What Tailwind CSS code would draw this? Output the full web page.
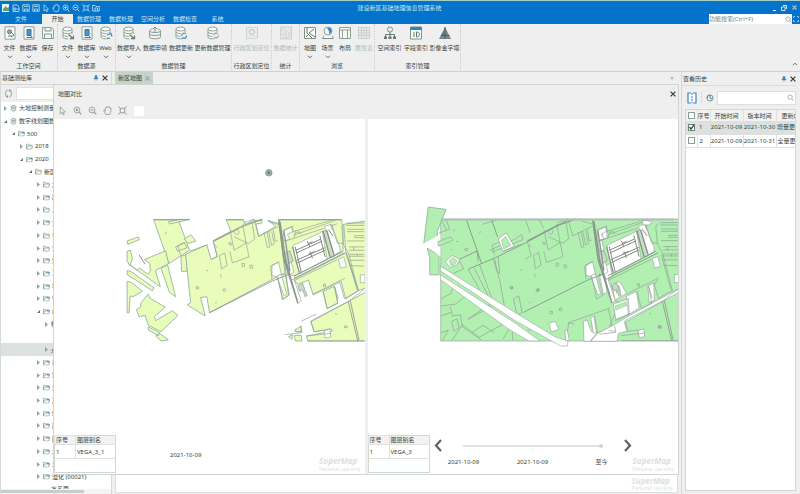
<!DOCTYPE html>
<html lang="zh-CN">
<head>
<meta charset="utf-8">
<title>建设新区基础地理信息管理系统</title>
<script src="https://cdn.jsdelivr.net/npm/@tailwindcss/browser@4"></script>
</head>
<body class="h-screen flex flex-col overflow-hidden bg-[#efefef] text-[#36443b] text-[6px] leading-[8px] font-['Noto_Sans','Noto_Sans_CJK_SC',sans-serif] whitespace-nowrap">

<svg class="hidden" aria-hidden="true">
  <symbol id="doc" viewBox="0 0 14 14"><path d="M2 .8h10v12.4H2z" fill="#f8faf9" stroke="#8ba294"/><circle cx="6.500" cy="5.800" r="2" fill="#9aaaa0" stroke="#667a6e"/><path d="M8 6l3 3-3 2M5 10h4" fill="none" stroke="#667a6e"/></symbol>
  <symbol id="docdb" viewBox="0 0 14 14"><path d="M2 .8h10v12.400H2z" fill="#f8faf9" stroke="#8ba294"/><path d="M5 3.500h4v6H5z" fill="#4b93cf" stroke="#33729f"/><path d="M4.500 11.500h6l-2-2" fill="none" stroke="#667a6e"/></symbol>
  <symbol id="save" viewBox="0 0 14 14"><path d="M1.500 1.500h9l2 2v9h-11z" fill="#f6f8f7" stroke="#8ba294"/><path d="M4 1.500v3.500h6V2M3.500 12.500V8h7v4.500" fill="none" stroke="#7d9486"/></symbol>
  <symbol id="db" viewBox="0 0 14 14"><path d="M2 3v8c0 2.400 9 2.400 9 0V3" fill="#f8faf9" stroke="#8ba294"/><ellipse cx="6.500" cy="3" rx="4.500" ry="2" fill="#fff" stroke="#8ba294"/><path d="M2 6c0 2 9 2 9 0M2 8.800c0 2 9 2 9 0" fill="none" stroke="#8ba294"/></symbol>
  <symbol id="dbarrow" viewBox="0 0 14 14"><use href="#db"/><path d="M7 8h6v5H7z" fill="#efefef"/><path d="M7.500 8.500l4.500 4M12.500 9.500v3.200H9" fill="none" stroke="#667a6e" stroke-width="1.200"/></symbol>
  <symbol id="dbweb" viewBox="0 0 14 14"><use href="#db"/><circle cx="10" cy="10" r="3" fill="#efefef"/><path d="M8 9l4-1.500 1 3" fill="none" stroke="#3d8ed0" stroke-width="1.300"/><path d="M8 12l3 .5" stroke="#667a6e"/></symbol>
  <symbol id="dbup" viewBox="0 0 14 14"><path d="M1.500 5v6c0 2.400 11 2.400 11 0V5M1.500 8c0 2 11 2 11 0M1.500 5c0-1.500 2-2 3-2M12.500 5c0-1.500-2-2-3-2M1.500 5c0 2 11 2 11 0" fill="none" stroke="#8ba294"/><path d="M7 6V1M5 3l2-2 2 2" fill="none" stroke="#7d9486"/></symbol>
  <symbol id="dbsync" viewBox="0 0 14 14"><use href="#db"/><circle cx="10" cy="9.500" r="3.600" fill="#efefef"/><path d="M7.500 10a2.600 2.600 0 0 1 4.500-2" fill="none" stroke="#7d9486" stroke-width="1.100"/><path d="M12.500 9.500a2.600 2.600 0 0 1-4.500 2" fill="none" stroke="#3d8ed0" stroke-width="1.300"/></symbol>
  <symbol id="dbsync2" viewBox="0 0 14 14"><use href="#db"/><circle cx="10" cy="9.500" r="3.600" fill="#efefef"/><circle cx="10" cy="9.500" r="2.500" fill="none" stroke="#7d9486" stroke-dasharray="6 2"/></symbol>
  <symbol id="locate" viewBox="0 0 14 14"><path d="M1.500 2l4-1 3 1 4-1v11l-4 1-3-1-4 1zM3 4l7 7M8 3L5 10" fill="#ececec" stroke="#cdd4d0"/><circle cx="7" cy="6" r="2.500" fill="#e8ebe9" stroke="#bcc5c0"/></symbol>
  <symbol id="stat" viewBox="0 0 14 14"><path d="M1.500 1h11v12h-11zM4 10V7M7 10V4M10 10V6M3 3h3M4 11.500h6" fill="#e6e9e7" stroke="#cdd4d0" stroke-width="1.200"/></symbol>
  <symbol id="map" viewBox="0 0 14 14"><path d="M1.500 1.500h11v11h-11z" fill="#f8faf9" stroke="#7d9486"/><path d="M4 2v5l5 5M11 3L6 7l6 4M3 11l3-3" fill="none" stroke="#667a6e"/></symbol>
  <symbol id="scene" viewBox="0 0 14 14"><path d="M3 10l-1.500 2.500h11L11 10" fill="#f8faf9" stroke="#7d9486"/><circle cx="7" cy="5" r="4" fill="#f8faf9" stroke="#8ba294"/><path d="M6 2c3-1 5 1 4.500 4L8 8V5z" fill="#2b83c9"/></symbol>
  <symbol id="layout" viewBox="0 0 14 14"><path d="M1.500 1.500h11v11h-11zM1.500 4h11M4.500 4v8.500M9.500 4v8.500" fill="#f8faf9" stroke="#8ba294"/></symbol>
  <symbol id="grid" viewBox="0 0 14 14"><path d="M1.500 1.500h11v11h-11zM1.500 4.500h11M1.500 7h11M1.500 9.500h11M4.500 1.500v11M7 1.500v11M9.500 1.500v11" fill="#eceeed" stroke="#c9d0cc"/></symbol>
  <symbol id="spatial" viewBox="0 0 14 14"><circle cx="7" cy="3.500" r="2.600" fill="#e3eee9" stroke="#7d9486"/><path d="M7 6v5M2.500 11V8.500h9V11" fill="none" stroke="#667a6e"/><path d="M1 10.500h3v2.500H1zM5.500 10.500h3V13h-3zM10 10.500h3V13h-3z" fill="#66796e"/></symbol>
  <symbol id="field" viewBox="0 0 14 14"><path d="M1.500 1h11v12h-11z" fill="#f8faf9" stroke="#7d9486"/><path d="M1.500 1h11v3h-11z" fill="#2b83c9"/><path d="M5 6v5M7.500 6v5c4 0 4-5 0-5z" fill="none" stroke="#667a6e"/></symbol>
  <symbol id="pyramid" viewBox="0 0 14 14"><path d="M7 1l6 12H1z" fill="#7d8a83"/><path d="M4.500 6.500l2 1v2l-3-1z" fill="#2b83c9"/><path d="M7 1v12M3 9.500h8.500" stroke="#4e5a54" fill="none"/></symbol>
  <symbol id="chev" viewBox="0 0 6 4"><path d="M1 .8l2 2 2-2" fill="none" stroke="#5d6b64" stroke-width="1"/></symbol>
  <symbol id="x" viewBox="0 0 6 6"><path d="M.6.6l4.800 4.800M5.400.6L.6 5.400" stroke="currentColor" stroke-width="1.300"/></symbol>
  <symbol id="pin" viewBox="0 0 6 6"><path d="M2 .5h2V3h1v1H1V3h1zM3 4v2" fill="#2b83c9" stroke="#4f8fbf" stroke-width=".5"/></symbol>
  <symbol id="lens" viewBox="0 0 8 8"><circle cx="3.500" cy="3.500" r="2.500" fill="none" stroke="currentColor" stroke-width=".8"/><path d="M5.300 5.300L7.500 7.500" stroke="currentColor"/></symbol>
  <symbol id="cursor" viewBox="0 0 8 8"><path d="M2 .7l4.500 4.500-2 .2 1 2-1 .4-.9-2L2 7z" fill="none" stroke="currentColor" stroke-width=".7"/></symbol>
  <symbol id="zin" viewBox="0 0 8 8"><circle cx="3.500" cy="3.500" r="2.600" fill="none" stroke="currentColor" stroke-width=".7"/><path d="M5.400 5.400l2 2M2.300 3.500h2.400M3.500 2.300v2.400" stroke="currentColor"/></symbol>
  <symbol id="zout" viewBox="0 0 8 8"><circle cx="3.500" cy="3.500" r="2.600" fill="none" stroke="currentColor" stroke-width=".7"/><path d="M5.400 5.400l2 2M2.300 3.500h2.400" stroke="currentColor"/></symbol>
  <symbol id="hand" viewBox="0 0 8 8"><path d="M2.600 7.500C1.500 6 .8 4.800.7 3.800l1.300.6V1.700h1V1h1v-.3h1V1h1v.8h1V5L6 7.500z" fill="none" stroke="currentColor" stroke-width=".7"/></symbol>
  <symbol id="extent" viewBox="0 0 8 8"><path d="M2 2h4v4H2zM.3.3L2 2M7.700.3L6 2M.3 7.700L2 6M7.700 7.700L6 6" fill="none" stroke="currentColor" stroke-width=".8"/></symbol>
  <symbol id="page" viewBox="0 0 8 8"><path d="M1 1h4l2 2v4.500H1zM3 3v4M1 5h6" fill="none" stroke="currentColor" stroke-width=".8"/></symbol>
  <symbol id="open" viewBox="0 0 8 8"><path d="M.7 7V1.500h2.500l.8 1h3.300V7zM3 7V4h2.500v3" fill="none" stroke="currentColor" stroke-width=".8"/></symbol>
  <symbol id="disk" viewBox="0 0 8 8"><path d="M.8.8h6.400v6.400H.8zM2.500 7V5h3v2M2 2.500h4" fill="none" stroke="currentColor" stroke-width=".8"/></symbol>
  <symbol id="folder" viewBox="0 0 7 6"><path d="M.5 5.500V.7h2l.7 1h2.600v1M.5 5.500l.9-3h5.100l-.7 3z" fill="#fff" stroke="#7f9d8c" stroke-width=".7"/></symbol>
  <symbol id="folderb" viewBox="0 0 7 6"><use href="#folder"/><path d="M3.500 1.700h2.600v1.300" fill="none" stroke="#3d8ed0" stroke-width=".9"/></symbol>
  <symbol id="src" viewBox="0 0 7 8"><path d="M1 1.800v4c0 1.600 5 1.600 5 0v-4" fill="#fff" stroke="#7d9486" stroke-width=".8"/><ellipse cx="3.500" cy="1.800" rx="2.500" ry="1.200" fill="#dfe8e3" stroke="#7d9486" stroke-width=".8"/><path d="M2 4.500h3" stroke="#3d8ed0"/></symbol>

  <!-- Buildings, tracks and plot boundaries that both epochs have in common -->
  <symbol id="common" viewBox="0 0 760 560" overflow="visible">
    <g fill="#fff" stroke="#93a89c" stroke-width="2">
      <path d="M521 258L602 220 610 214 624 300 542 342 528 300z"/>
      <path d="M616 200L638 194 648 226 662 262 664 276 642 290 628 240z"/>
      <path d="M458 318l20-10 8 36-14 8-14-4zM512 238l-18 6-2-30 25-12 3 14-16 8zM658 298l16-6 8 30-18 4zM724 346h14v24h-14z"/>
      <path d="M500 290l10-6 14 54-12 8zM472 350l14-6 16 60-8 4z"/>
      <path d="M615 515l17-6 3 24-17 3z"/>
      <path d="M516 362l8-4 22 66-10 8z"/>
    </g>
    <path d="M494 280l18-6 10 30-18 12zM610 216l14-4 22 76-12 6zM536 380l14-8 14 36-6 4-8-22-8 6z" fill="#c9dcc4" stroke="#8a988f" stroke-width="2"/>
    <g fill="none" stroke="#8fa095" stroke-width="2">
      <path d="M332 212L344 272 380 250 370 195M344 232l44 20 18-14-8-50M380 250l9 42-50 18-8-34M372 190l32-12 14 52 60-30M300 288l16-8 7 38-17 10zM275 300l18-10-12-46 92-48 55-18M344 215c6-8 16-6 14 4s-12 6-14-4"/>
      <path d="M434 218l10 46 8-2-9-46M448 215l9 42 8-4-8-38M462 210l6 35 7-3M445 185l35 10"/>
      <path d="M210 275l55-20M183 288l-8-30 22-10M458 360l-4-40 26-14M475 350l15 70 20-14-12-64"/>
      <path d="M270 460l190-96 50-20M283 245l90-46 56-20" stroke="#858f88" stroke-width="2.500"/>
      <path d="M478 180l16 120 42 132M482 186l18 120 34 118M494 214l18 120" stroke="#8c968f" stroke-width="4"/>
      <path d="M490 212l30-12 2 20M522 216l120-36M525 226l130-46M530 212l-6 24 90-30M640 210l-6-16M655 192l-18 6 18 52 18 2M676 192l-8 8 5 55 16 28 29 112M684 285l30 106M500 244l24-8M530 220l10-4 4 8"/>
      <path d="M528 273l76-34M532 302l86-38M530 281l78-36M534 310l84-38" stroke="#858782" stroke-width="3"/>
      <path d="M564 244l8 18M572 276l8 20M602 228l16 64M568 252l12-6M568 284l18-8M612 214l20 78M622 212l22 72M628 210l14 20M520 262l20 78M528 262l18 76" stroke="#858782" stroke-width="3"/>
      <path d="M524 357L676 280M524 350L668 276" stroke="#838d86" stroke-width="2.500"/>
      <path d="M524 364L655 300M580 405l98-49M612 396l12 52 32-16-10-52M646 380l12 38M662 370l14 48 44-26"/>
      <path d="M682 190h54M682 197h54M684 209h52M684 216h52M705 228h31M705 234h31M684 244h52M690 262h46M690 272h46M690 284h46M690 290h46M690 302h46M690 318l46 2M704 262v12M715 284v8" stroke="#8c9c92"/>
      <path d="M575 485l115-60 46-36M575 485l10 32 30-4M562 530l74-8M565 545h170M545 486l46-22M498 526l50-6-4-20M526 516l20 0"/>
      <path d="M688 428l22 92 6 25M694 425l26 118" stroke="#8b938e" stroke-width="2.500"/>
      <path d="M135 224l8-8M286 256l8 8M302 344l4 10M286 432l6-4M230 382h7v6h-7zM310 390l6-3 3 6-6 3zM260 334l6-2M328 250l6-2 2 8-6 0zM368 312h7v9h-7zM391 318l7-2 2 10-8 0zM613 374h6v7h-6zM648 462l6 4M676 500h8v5h-8z"/>
    </g>
  </symbol>
</svg>

<header class="bg-[#0473cb] text-[#c9e9ef] border-t border-[#a5cfc8] shrink-0">
  <div class="h-[13px] grid grid-cols-[1fr_auto_1fr] items-center pl-[2px] pr-[3px]">
    <div class="flex gap-[2px] items-center">
      <svg class="size-[8px]"><rect x="0" y="0" width="7" height="8" fill="#e9f2ef"/><path d="M1 5l3-3 1 2 2-1v4H1z" fill="#5f9a7d"/></svg>
      <button aria-label="新建"><svg class="size-[8px] block"><use href="#page"/></svg></button>
      <button aria-label="保存"><svg class="size-[8px] block"><use href="#disk"/></svg></button>
      <button aria-label="另存"><svg class="size-[8px] block"><use href="#disk"/></svg></button>
      <button aria-label="选择"><svg class="size-[8px] block"><use href="#cursor"/></svg></button>
      <button aria-label="漫游"><svg class="size-[8px] block"><use href="#hand"/></svg></button>
      <button aria-label="放大"><svg class="size-[8px] block"><use href="#zin"/></svg></button>
      <button aria-label="缩小"><svg class="size-[8px] block"><use href="#zout"/></svg></button>
      <button aria-label="全幅"><svg class="size-[8px] block"><use href="#extent"/></svg></button>
      <button aria-label="打开"><svg class="size-[8px] block"><use href="#open"/></svg></button>
    </div>
    <h1>建设新区基础地理信息管理系统</h1>
    <div class="flex justify-end items-center gap-[5px]">
      <button aria-label="最小化" class="w-[3px] h-[6px] border-b border-white"></button>
      <button aria-label="还原"><svg class="size-[6px] block"><path d="M2 .5h3.500V4M.5 2h3.500v3.500H.5z" fill="none" stroke="#d5e8f5"/></svg></button>
      <button aria-label="关闭" class="text-[#c9b9a5]"><svg class="size-[5px] block"><use href="#x"/></svg></button>
    </div>
  </div>
  <div class="h-[10px] flex items-stretch">
    <nav class="flex items-stretch text-center">
      <button class="w-[42px]">文件</button>
      <button class="w-[31px] bg-[#efefef] text-[#36443b]">开始</button>
      <button class="w-[32px]">数据管理</button>
      <button class="w-[32px]">数据处理</button>
      <button class="w-[32px]">空间分析</button>
      <button class="w-[32px]">数据检查</button>
      <button class="w-[33px]">系统</button>
    </nav>
    <label class="ml-auto w-[83px] flex items-center bg-white text-[#84988c]">
      <input aria-label="功能搜索" placeholder="功能搜索(Ctrl+F)" class="w-full min-w-0 h-[10px] outline-none placeholder:text-[#74887c]">
      <svg class="size-[7px] shrink-0"><use href="#lens"/></svg>
    </label>
    <button aria-label="全屏" class="w-[8px] flex items-center justify-center"><svg class="size-[6px]"><path d="M.5 2V.5H2M4 .5h1.500V2M5.500 4v1.500H4M2 5.500H.5V4" fill="none" stroke="#8cc6ec"/></svg></button>
  </div>
</header>

<section class="h-[48px] shrink-0 flex border-b border-[#cbd3ce] pb-[1px]">
  <div class="flex flex-col border-r border-dotted border-[#c6cfca]">
    <div class="flex flex-1 pt-[2px]">
      <button class="w-[19px] flex flex-col items-center"><svg class="size-[14px] mb-[4px]"><use href="#doc"/></svg>文件<svg class="w-[6px] h-[4px] mt-[3px]"><use href="#chev"/></svg></button>
      <button class="w-[19px] flex flex-col items-center"><svg class="size-[14px] mb-[4px]"><use href="#docdb"/></svg>数据库<svg class="w-[6px] h-[4px] mt-[3px]"><use href="#chev"/></svg></button>
      <button class="w-[19px] flex flex-col items-center"><svg class="size-[14px] mb-[4px]"><use href="#save"/></svg>保存</button>
    </div>
    <div class="text-center">工作空间</div>
  </div>
  <div class="flex flex-col border-r border-dotted border-[#c6cfca]">
    <div class="flex flex-1 pt-[2px]">
      <button class="w-[19px] flex flex-col items-center"><svg class="size-[14px] mb-[4px]"><use href="#dbarrow"/></svg>文件<svg class="w-[6px] h-[4px] mt-[3px]"><use href="#chev"/></svg></button>
      <button class="w-[19px] flex flex-col items-center"><svg class="size-[14px] mb-[4px]"><use href="#docdb"/></svg>数据库<svg class="w-[6px] h-[4px] mt-[3px]"><use href="#chev"/></svg></button>
      <button class="w-[19px] flex flex-col items-center"><svg class="size-[14px] mb-[4px]"><use href="#dbweb"/></svg>Web<svg class="w-[6px] h-[4px] mt-[3px]"><use href="#chev"/></svg></button>
    </div>
    <div class="text-center">数据源</div>
  </div>
  <div class="flex flex-col border-r border-dotted border-[#c6cfca]">
    <div class="flex flex-1 pt-[2px]">
      <button class="w-[26px] flex flex-col items-center"><svg class="size-[14px] mb-[4px]"><use href="#dbarrow"/></svg>数据导入<svg class="w-[6px] h-[4px] mt-[3px]"><use href="#chev"/></svg></button>
      <button class="w-[26px] flex flex-col items-center"><svg class="size-[14px] mb-[4px]"><use href="#dbup"/></svg>数据申领</button>
      <button class="w-[26px] flex flex-col items-center"><svg class="size-[14px] mb-[4px]"><use href="#dbsync"/></svg>数据更新</button>
      <button class="w-[37px] flex flex-col items-center"><svg class="size-[14px] mb-[4px]"><use href="#dbsync2"/></svg>更新数据管理</button>
    </div>
    <div class="text-center">数据管理</div>
  </div>
  <div class="flex flex-col border-r border-dotted border-[#c6cfca]">
    <div class="flex flex-1 pt-[2px]">
      <button disabled class="w-[39px] flex flex-col items-center text-[#aebbb3]"><svg class="size-[14px] mb-[4px]"><use href="#locate"/></svg>行政区划定位</button>
    </div>
    <div class="text-center">行政区划定位</div>
  </div>
  <div class="flex flex-col border-r border-dotted border-[#c6cfca]">
    <div class="flex flex-1 pt-[2px]">
      <button disabled class="w-[27px] flex flex-col items-center text-[#aebbb3]"><svg class="size-[14px] mb-[4px]"><use href="#stat"/></svg>数据统计</button>
    </div>
    <div class="text-center">统计</div>
  </div>
  <div class="flex flex-col border-r border-dotted border-[#c6cfca]">
    <div class="flex flex-1 pt-[2px] pl-[1px]">
      <button class="w-[18px] flex flex-col items-center"><svg class="size-[14px] mb-[4px]"><use href="#map"/></svg>地图<svg class="w-[6px] h-[4px] mt-[3px]"><use href="#chev"/></svg></button>
      <button class="w-[17px] flex flex-col items-center"><svg class="size-[14px] mb-[4px]"><use href="#scene"/></svg>场景<svg class="w-[6px] h-[4px] mt-[3px]"><use href="#chev"/></svg></button>
      <button class="w-[18px] flex flex-col items-center"><svg class="size-[14px] mb-[4px]"><use href="#layout"/></svg>布局</button>
      <button disabled class="w-[20px] flex flex-col items-center text-[#aebbb3]"><svg class="size-[14px] mb-[4px]"><use href="#grid"/></svg>属性表</button>
    </div>
    <div class="text-center">浏览</div>
  </div>
  <div class="flex flex-col border-r border-dotted border-[#c6cfca]">
    <div class="flex flex-1 pt-[2px] pl-[1px]">
      <button class="w-[27px] flex flex-col items-center"><svg class="size-[14px] mb-[4px]"><use href="#spatial"/></svg>空间索引</button>
      <button class="w-[26px] flex flex-col items-center"><svg class="size-[14px] mb-[4px]"><use href="#field"/></svg>字段索引</button>
      <button class="w-[31px] flex flex-col items-center"><svg class="size-[14px] mb-[4px]"><use href="#pyramid"/></svg>影像金字塔</button>
    </div>
    <div class="text-center">索引管理</div>
  </div>
  <button aria-label="收起功能区" class="ml-auto self-end mr-[2px] mb-[4px]"><svg class="w-[6px] h-[4px] block rotate-180"><use href="#chev"/></svg></button>
</section>

<main class="relative flex-1 min-h-0 grid grid-cols-[112px_1fr_119px] gap-x-[3px]">
  <aside class="relative flex flex-col min-h-0 border-x border-[#d4dad7]">
    <div class="h-[13px] shrink-0 flex items-center pl-[1px] pr-[3px] border-b border-[#d4dad7]">
      <h2>基础测绘库</h2>
      <button aria-label="固定" class="ml-auto mr-[3px]"><svg class="size-[6px] block"><use href="#pin"/></svg></button>
      <button aria-label="关闭面板"><svg class="size-[6px] block"><use href="#x"/></svg></button>
    </div>
    <div class="h-[17px] shrink-0 flex items-center pl-[3px] gap-[3px]">
      <button aria-label="刷新"><svg viewBox="0 0 10 10" class="size-[9px] block" fill="none" stroke="#7d9486"><path d="M4 1C1 2 1 8 4 9M2 8l2 1V7"/><path d="M6 9c3-1 3-7 0-8M8 2L6 1v2"/></svg></button>
      <input aria-label="筛选" class="flex-1 min-w-0 h-[13px] bg-white border border-[#dfe4e1]">
    </div>
    <ul id="tree" class="flex-1 min-h-0 flex flex-col bg-white overflow-hidden -mb-[2px]"></ul>
    <div class="absolute inset-x-0 bottom-0 h-[5px] bg-[#f2f4f3] pt-[1px]"><div class="w-3/4 h-[3px] bg-[#c3cfc8]"></div></div>
  </aside>

  <section class="flex flex-col min-h-0">
    <div class="h-[13px] shrink-0 flex border-b border-[#c6d3cb]">
      <button class="bg-[#c6d3cb] pl-[3px] pr-[3px] flex items-center gap-[3px]">新区地图<svg class="size-[5px] text-[#9aaca1]"><use href="#x"/></svg></button>
      <button aria-label="窗口列表" class="ml-auto mr-[4px]"><svg class="w-[4px] h-[3px]" viewBox="0 0 6 4"><path d="M0 0h6L3 4z" fill="#a5b2aa"/></svg></button>
    </div>
    <div class="flex-1 bg-white border border-[#d9dfdc] mb-[1px] flex items-end justify-end">
      <div class="pr-[4px] text-[#dcdfdd] text-[5px] leading-[7px]"><div class="text-[8px] leading-[9px] italic font-bold">SuperMap</div>Personal use only</div>
    </div>
  </section>

  <aside class="flex flex-col min-h-0 min-w-0 border-l border-[#d4dad7] pr-[4px]">
    <div class="h-[13px] shrink-0 flex items-center pl-[1px]">
      <h2>查看历史</h2>
      <button aria-label="固定" class="ml-auto mr-[3px]"><svg class="size-[6px] block"><use href="#pin"/></svg></button>
      <button aria-label="关闭面板"><svg class="size-[6px] block"><use href="#x"/></svg></button>
    </div>
    <div class="h-[24px] shrink-0 flex items-center border-t border-[#d9dfdc] pl-[5px]">
      <button aria-label="对比"><svg class="w-[10px] h-[12px] block" viewBox="0 0 10 12"><path d="M4 1H1v10h3M6 1h3v10H6" fill="#fff" stroke="#3487c4" stroke-width="1.200"/><path d="M5 1v10" stroke="#58a" stroke-dasharray="2 1"/></svg></button>
      <span class="h-[11px] border-l border-dotted border-[#c6cfca] mx-[4px]"></span>
      <button aria-label="时间"><svg class="size-[8px] block" viewBox="0 0 8 8"><circle cx="4" cy="4" r="3" fill="none" stroke="#7d9486"/><path d="M1 4a3 3 0 0 1 3-3M4 2v2l2 1" fill="none" stroke="#3487c4"/></svg></button>
      <label class="ml-[3px] flex-1 min-w-0 flex items-center bg-white border border-[#d9dfdc] text-[#8a9b91]"><input aria-label="搜索历史" class="w-full min-w-0 h-[12px] outline-none"><svg class="size-[7px] mr-[1px] shrink-0"><use href="#lens"/></svg></label>
    </div>
    <div class="flex-1 ml-[3px] mb-[3px] bg-white border border-[#cfd8d3] overflow-hidden">
      <table class="w-[128px] table-fixed border-collapse text-center">
        <colgroup><col class="w-[11px]"><col class="w-[13px]"><col class="w-[33px]"><col class="w-[33px]"><col class="w-[38px]"></colgroup>
        <thead><tr class="h-[11px] bg-[#f1f2f1]">
          <th class="p-0 border-r border-[#dde2df]"><input type="checkbox" aria-label="全选" class="appearance-none size-[7px] border border-[#8aa093] bg-white block mx-auto"></th>
          <th class="p-0 font-normal border-r border-[#dde2df]">序号</th><th class="p-0 font-normal border-r border-[#dde2df]">开始时间</th><th class="p-0 font-normal border-r border-[#dde2df]">版本时间</th><th class="p-0 pl-[5px] font-normal text-left">更新内容</th></tr></thead>
        <tbody>
          <tr class="h-[13px] bg-[#dce1df] border-b border-[#dde2df]"><td class="p-0"><label class="grid place-items-center"><input type="checkbox" checked aria-label="选择 1" class="col-start-1 row-start-1 appearance-none size-[7px] border border-[#6f8478] bg-white"><svg class="col-start-1 row-start-1 size-[7px] pointer-events-none" viewBox="0 0 7 7"><path d="M1.500 3l1.600 2.200L5.800 1" fill="none" stroke="#36443b" stroke-width="1.300"/></svg></label></td><td class="p-0 pl-[2px] text-left">1</td><td class="p-0">2021-10-09</td><td class="p-0">2021-10-30</td><td class="p-0 pl-[1px] text-left">增量更新</td></tr>
          <tr class="h-[13px] border-b border-[#dde2df]"><td class="p-0"><input type="checkbox" aria-label="选择 2" class="appearance-none size-[7px] border border-[#8aa093] bg-white block mx-auto"></td><td class="p-0 pl-[2px] text-left border-x border-[#dde2df]">2</td><td class="p-0 border-r border-[#dde2df]">2021-10-09</td><td class="p-0 border-r border-[#dde2df]">2021-10-31</td><td class="p-0 pl-[1px] text-left">全量更新</td></tr>
        </tbody>
      </table>
    </div>
  </aside>

  <!-- Floating comparison window -->
  <div role="dialog" aria-label="地图对比" class="absolute left-[53px] right-[121px] top-[12px] bottom-[19px] flex flex-col bg-[#efefef] border border-[#cdd6d1]">
    <div class="h-[17px] shrink-0 flex items-center pl-[4px] pr-[2px]"><h2>地图对比</h2><button aria-label="关闭" class="ml-auto"><svg class="size-[6px] block"><use href="#x"/></svg></button></div>
    <div class="h-[17px] shrink-0 flex items-center pl-[4px] gap-[6px] text-[#84998c]">
      <button aria-label="选择"><svg class="size-[9px] block"><use href="#cursor"/></svg></button>
      <button aria-label="放大"><svg class="size-[9px] block"><use href="#zin"/></svg></button>
      <button aria-label="缩小"><svg class="size-[9px] block"><use href="#zout"/></svg></button>
      <button aria-label="漫游"><svg class="size-[9px] block"><use href="#hand"/></svg></button>
      <button aria-label="全幅"><svg class="size-[9px] block"><use href="#extent"/></svg></button>
      <span class="ml-[1px] size-[10px] bg-white"></span>
    </div>
    <div class="flex-1 min-h-0 grid grid-cols-2 gap-x-[3px]">
      <section class="bg-white flex flex-col min-w-0 min-h-0">
        <svg viewBox="54 119 310 317" preserveAspectRatio="xMinYMin meet" class="flex-1 min-h-0 w-full">
          <circle cx="269.500" cy="173" r="3.300" fill="#9fb3a8" stroke="#72877b" stroke-width=".6"/><path d="M268 174l1.500-3 1.500 3z" fill="#5d7066"/>
          <g transform="translate(120 160) scale(.33333)">
            <g fill="#e9fcba" stroke="#8fae9e" stroke-width="2.500" stroke-linejoin="round">
              <path d="M102 180H176L210 272 148 312z"/><path d="M147 186L180 179H210L150 193z"/>
              <path d="M194 238L214 226 229 244 206 252zM168 262L194 250 203 264 174 275z"/>
              <path d="M22 244L56 232 59 240 24 254zM22 275L32 272 38 298 30 318 22 305z"/>
              <path d="M30 316L52 332 60 326 84 344 92 334 90 312 74 300 138 274 147 312 107 333 122 382z"/><path d="M58 286L76 314" stroke="#777f7a"/>
              <path d="M22 333L34 336 103 385 98 394 22 345zM22 366L34 368 68 395 42 411 31 410 28 460H22z"/>
              <path d="M124 326L144 316 168 412 150 400z"/>
              <path d="M86 404L90 416 137 443 104 472 108 484 158 454 175 468 124 517 86 498 76 468 58 472 50 450 62 444 64 430z"/>
              <path d="M86 503L120 520 116 529 86 512zM120 522L146 542 124 545 108 530z"/>
              <path d="M184 290L200 286 203 335 186 336z"/>
              <path d="M198 284L262 256 275 300 293 291 281 243 335 215 320 180H372L378 195 400 182H428L428 190 410 193 418 230 470 200 446 182 480 192 497 340 458 360 270 460 262 412 243 414 257 470 203 436 213 430z"/>
              <path d="M478 180H667L672 205 672 276 524 350 500 340z"/>
              <path d="M674 194L740 184V385L718 394 680 276z"/>
              <path d="M474 350L500 343 508 408 490 420z"/>
              <path d="M524 360L680 280 718 394 680 418 666 366 582 406 568 362 535 375z"/>
              <path d="M612 396L646 380 656 430 624 448z"/>
              <path d="M575 487L690 425 740 398V545H565L562 530 640 515 635 508 585 518z"/>
              <path d="M526 512L546 500V518L532 518zM508 532L520 526 518 540zM526 528H546L548 545H528z"/>
            </g>
            <use href="#common" width="760" height="560"/>
            <path d="M478 180H667M102 180H210M320 180H372" stroke="#94a79b" stroke-width="4"/>
          </g>
        </svg>
        <div class="h-[39px] shrink-0 flex">
          <table class="w-[62px] h-[38px] table-fixed border-collapse border border-[#cfd8d3]">
            <colgroup><col class="w-[21px]"><col></colgroup>
            <thead><tr class="bg-[#f1f2f1]"><th class="p-0 pl-[1px] font-normal text-left border border-[#dde2df]">序号</th><th class="p-0 pl-[1px] font-normal text-left">图层别名</th></tr></thead>
            <tbody><tr class="border-y border-[#dde2df]"><td class="p-0 pl-[1px] border-r border-[#dde2df]">1</td><td class="p-0 pl-[1px]">VEGA_3_1</td></tr><tr><td class="p-0" colspan="2">&nbsp;</td></tr></tbody>
          </table>
          <time class="ml-[54px] mt-[16px]">2021-10-09</time>
          <div class="ml-auto self-end pr-[4px] pb-[1px] text-[#dcdfdd] text-[5px] leading-[7px]"><div class="text-[8px] leading-[11px] italic font-bold">SuperMap</div>Personal use only</div>
        </div>
      </section>
      <section class="bg-white flex flex-col min-w-0 min-h-0">
        <svg viewBox="367 119 310 317" preserveAspectRatio="xMinYMin meet" class="flex-1 min-h-0 w-full">
          <g transform="translate(415 200) scale(.33333)">
            <path d="M75 58H800V425H75z" fill="#b2f0b2" stroke="#9db0a3" stroke-width="2.500"/>
            <path d="M37 22L91 29 64 96 66 110 24 130zM34 146L70 166V226H42V174z" fill="#b2f0b2" stroke="#8fae9e" stroke-width="2.500"/>
            <path d="M24 130L74 104V172L60 160z" fill="#fff"/>
            <path d="M66 126L106 112 112 122 68 140z" fill="#b2f0b2" stroke="#96a29a" stroke-width="2"/>
            <g fill="none" stroke="#96a29a" stroke-width="2.200">
              <path d="M330 60L344 100M372 60L384 86M78 60L92 92M92 60L100 86M70 100L104 88M106 150h4M122 126h6M112 92h6M148 146h7v7h-7zM200 74L252 58M222 152L300 118 318 104 322 120 228 158"/>
              <path d="M152 60L198 192M198 192L240 174 320 135 378 104 455 62M198 192L160 208M184 154L126 182M184 154L188 185M228 60L246 112" stroke="#858f88" stroke-width="2.500"/>
              <path d="M158 210L192 270M176 206L218 290M192 196L230 300M232 176L246 220 254 250 266 318M248 172L252 222M160 208L158 214M130 182L144 208 112 222M294 298L310 290 320 340 304 346zM238 180L244 214 252 222"/>
              <path d="M76 298L106 282 110 268M76 320L120 314 156 284M104 322L110 350 134 346 140 382 200 424M76 350L108 338M108 366L124 358 130 386 114 396zM156 360L206 326M156 360L226 322 218 314M76 400L98 392 80 424M140 376L108 424M168 400L202 378 236 400M190 414L260 376M262 420L280 390 330 398 362 384 370 400M290 396L292 424M140 376L190 414"/>
              <path d="M456 400L460 370 478 374M460 370L584 326M538 350L546 400 580 390 600 340M512 360L524 400M580 330L600 424M590 300L640 320 600 360M700 280L728 240"/>
              <path d="M404 336h7v7h-7zM432 326h7v7h-7zM730 380h7v7h-7zM286 262h6v6h-6zM362 270h7v6h-7z"/>
            </g>
            <path d="M74 200L316 350 418 412 458 425 456 440 436 440 300 365 74 214z" fill="#fff" stroke="#9db0a3" stroke-width="2"/>
            <path d="M74 226L300 372 374 425 340 425 280 390 74 240z" fill="#fff" stroke="#9db0a3" stroke-width="2"/>
            <g fill="#fff" stroke="#96a29a" stroke-width="2">
              <path d="M88 186L110 168 132 180 124 196 104 204zM248 118L272 100 296 140 262 156z"/>
              <path d="M400 372L420 366 430 390 408 398zM448 394L456 392 462 424H452zM504 366L516 362 528 396 546 400 524 426H506z"/>
              <path d="M526 354L536 350 544 400 534 402z"/>
              <path d="M550 230L566 224 576 278 562 286zM560 96L574 94 576 116 562 118zM560 204L584 192 592 232 572 240zM548 126L560 122 566 152 554 156z"/>
              <path d="M588 254L614 246 634 282 600 302zM594 314L640 298 642 344 602 360zM634 290L664 276 672 326 640 346zM698 258L716 252 718 302 702 310z"/>
              <path d="M526 426L548 402 600 374 640 350 790 268V280L628 370 636 396 610 402 606 426z"/>
              <path d="M668 394L684 390 686 410 672 414z"/>
            </g>
            <path d="M100 184L112 174 124 184 116 196 106 198zM258 122L270 110 286 138 264 148zM600 262L612 258 616 276 604 282zM600 320L632 308 634 318 602 332z" fill="#b2f0b2" stroke="#96a29a" stroke-width="1.500"/>
            <use href="#common" width="760" height="560" transform="translate(54 -121)"/>
            <path d="M75 60H776" stroke="#b0c0b6" stroke-width="5"/>
            <path d="M680 66c8-6 22-4 30 2l-6 8h-18z" fill="#fff" stroke="#8d9991" stroke-width="2"/>
          </g>
        </svg>
        <div class="h-[39px] shrink-0 flex">
          <table class="w-[62px] h-[38px] table-fixed border-collapse border border-[#cfd8d3]">
            <colgroup><col class="w-[21px]"><col></colgroup>
            <thead><tr class="bg-[#f1f2f1]"><th class="p-0 pl-[1px] font-normal text-left border border-[#dde2df]">序号</th><th class="p-0 pl-[1px] font-normal text-left">图层别名</th></tr></thead>
            <tbody><tr class="border-y border-[#dde2df]"><td class="p-0 pl-[1px] border-r border-[#dde2df]">1</td><td class="p-0 pl-[1px]">VEGA_3</td></tr><tr><td class="p-0" colspan="2">&nbsp;</td></tr></tbody>
          </table>
          <button aria-label="上一个" class="ml-[4px] mt-[4px] self-start"><svg class="w-[8px] h-[13px] block" viewBox="0 0 8 13"><path d="M7 1L2 6.500 7 12" fill="none" stroke="#59645e" stroke-width="2.200"/></svg></button>
          <div class="flex-1 mx-[2px] pt-[8px] flex flex-col">
            <input type="range" min="0" max="2" value="2" aria-label="时间轴" class="mx-[19px] h-[5px] appearance-none bg-transparent [&::-webkit-slider-runnable-track]:h-[2px] [&::-webkit-slider-runnable-track]:bg-[#dfe3e1] [&::-webkit-slider-thumb]:appearance-none [&::-webkit-slider-thumb]:size-[4px] [&::-webkit-slider-thumb]:-mt-[1px] [&::-webkit-slider-thumb]:rounded-full [&::-webkit-slider-thumb]:bg-[#cfd6d2]">
            <span class="h-[4px] mx-auto border-l border-[#eceeed]"></span>
            <div class="mt-[6px] grid grid-cols-[36px_1fr_36px] text-center px-[2px]"><time>2021-10-09</time><time>2021-10-09</time><span>至今</span></div>
          </div>
          <button aria-label="下一个" class="mt-[4px] self-start"><svg class="w-[8px] h-[13px] block" viewBox="0 0 8 13"><path d="M1 1l5 5.500L1 12" fill="none" stroke="#59645e" stroke-width="2.200"/></svg></button>
          <div class="self-end pl-[1px] pr-[4px] pb-[1px] text-[#dcdfdd] text-[5px] leading-[7px]"><div class="text-[8px] leading-[11px] italic font-bold">SuperMap</div>Personal use only</div>
        </div>
      </section>
    </div>
  </div>
</main>

<script>
// level, state (c = collapsed, o = open, n = leaf), icon, label, selected
const rows = [
  [0,'c','src','大地控制测量数据'],[0,'o','src','数字线划图数据'],[1,'o','folderb','500'],[2,'c','folder','2018'],[2,'o','folderb','2020'],[3,'o','folder','新区'],
  [4,'c','folder','水'],[4,'c','folderb','居'],[4,'c','folder','人'],[4,'c','folderb','文'],[4,'c','folder','电'],[4,'c','folder','交'],[4,'c','folderb','境'],[4,'c','folderb','工'],[4,'c','folderb','地'],[4,'c','folderb','管'],
  [4,'o','folderb','植'],[5,'c','','植'],[5,'n','',''],[5,'c','','点',1],
  [4,'c','folderb','房'],[4,'c','folderb','境'],[4,'c','folderb','注'],[4,'c','folderb','高'],[4,'c','folderb','线'],[4,'c','folderb','面'],[4,'c','folderb','图'],[4,'c','folderb','点'],[4,'c','folderb','土'],[4,'c','folderb','湿化 (00021)'],[5,'n','','水系面']
];
const indent = ['pl-[2px]','pl-[10px]','pl-[18px]','pl-[27px]','pl-[35px]','pl-[43px]'];
const arrow = {c:'<path d="M1 0l3 2.500L1 5z" fill="#93a69b"/>', o:'<path d="M4 1v3H1z" fill="#5f7368"/>', n:''};
document.getElementById('tree').innerHTML = rows.map(([l,s,i,t,sel]) =>
  `<li class="flex-1 min-h-0 flex items-center ${indent[l]} ${sel ? 'bg-[#dde1df]' : ''}"><svg class="size-[5px] shrink-0 mr-[2px]">${arrow[s]}</svg>${i ? `<svg class="w-[7px] h-[7px] shrink-0 mr-[2px]"><use href="#${i}"/></svg>` : ''}<span>${t}</span></li>`).join('');
</script>
</body>
</html>
